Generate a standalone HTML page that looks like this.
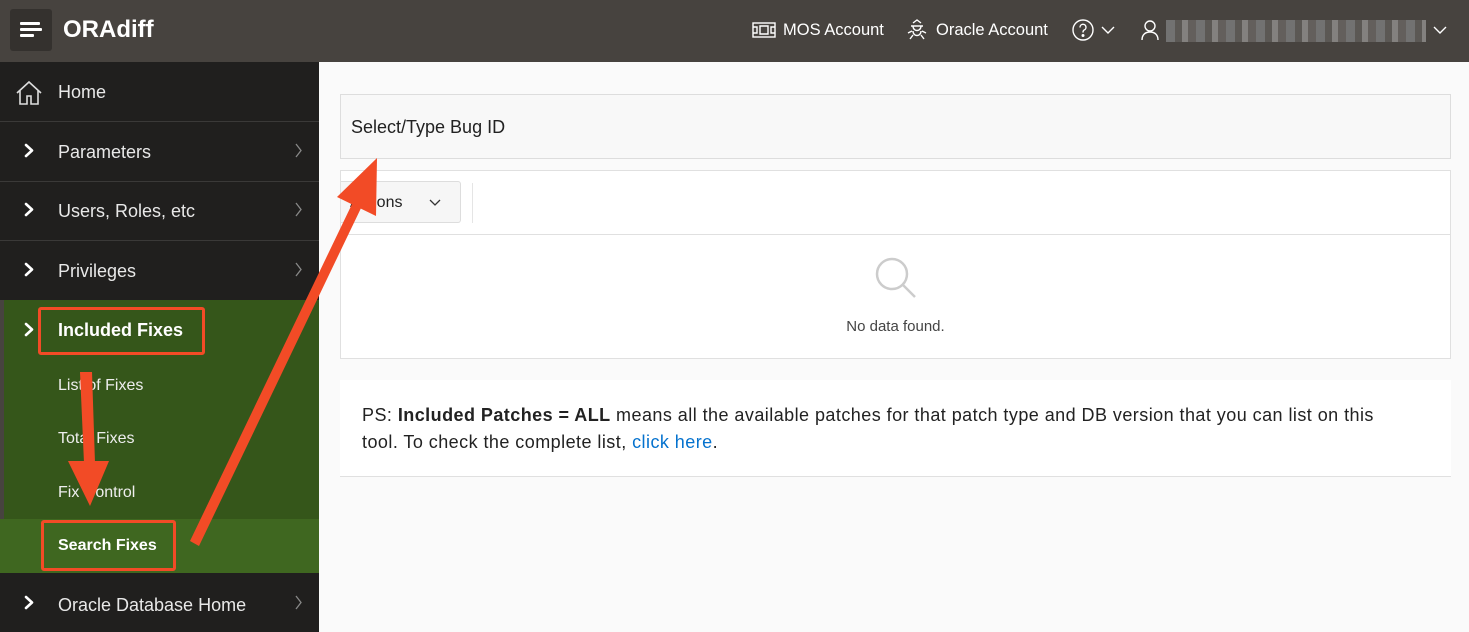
<!DOCTYPE html>
<html><head><meta charset="utf-8"><style>
*{box-sizing:border-box;margin:0;padding:0}
body{width:1469px;height:632px;overflow:hidden;font-family:"Liberation Sans",sans-serif;background:#fafafa;position:relative}
.top{position:absolute;left:0;top:0;width:1469px;height:62px;background:#47433f;color:#fff}
.burger{position:absolute;left:10px;top:9px;width:42px;height:42px;background:#34312e;border-radius:3px}
.burger i{position:absolute;left:10px;height:3px;background:#fff;border-radius:1px}
.logo{position:absolute;left:63px;top:16px;font-size:24px;font-weight:bold}
.nav{position:absolute;top:21px;font-size:16.5px;color:#fff}
.side{position:absolute;left:0;top:62px;width:319px;height:570px;background:#201f1e;color:#e8e8e8}
.item{position:absolute;left:0;width:319px;height:60px;border-bottom:1px solid #3a3938;font-size:18px}
.item span{position:absolute;left:58px;top:20px}
.green{position:absolute;left:0;top:300px;width:319px;height:219px;background:#35561a;border-left:4px solid #47433f}
.sel{position:absolute;left:0;top:519px;width:319px;height:54px;background:#3f6720}
.sub{position:absolute;left:58px;font-size:16px;color:#eee}
.box{position:absolute;border:1px solid #e0e0e0;background:#fff}
.red{position:absolute;border:3px solid #f24b26;border-radius:3px}
</style></head><body>
<div class="top">
<div class="burger"><i style="top:13px;width:20px"></i><i style="top:19px;width:22px"></i><i style="top:25px;width:14px"></i></div>
<div class="logo">ORAdiff</div>
<svg style="position:absolute;left:752px;top:22px" width="24" height="16" viewBox="0 0 24 16" fill="none" stroke="#fff" stroke-width="1.4"><rect x="1" y="1" width="22" height="14"/><path d="M1 5h4v6H1M23 5h-4v6h4M8 4h8v8H8z"/></svg>
<div class="nav" style="left:783px">MOS Account</div>
<svg style="position:absolute;left:906px;top:19px" width="22" height="22" viewBox="0 0 22 22" fill="none" stroke="#fff" stroke-width="1.4"><path d="M7 4l4-3 4 3M5 7h12M7 7c0 6 8 6 8 0M6 12l-4 2M16 12l4 2M7 16l-3 4M15 16l3 4M7 12c0 6 8 6 8 0"/></svg>
<div class="nav" style="left:936px">Oracle Account</div>
<svg style="position:absolute;left:1072px;top:19px" width="22" height="22" viewBox="0 0 22 22" fill="none" stroke="#fff" stroke-width="1.4"><circle cx="11" cy="11" r="10"/><path d="M8 8.5a3 3 0 1 1 4 2.6c-1 .5-1 1-1 2.4"/><circle cx="11" cy="16.5" r=".8" fill="#fff"/></svg>
<svg style="position:absolute;left:1101px;top:26px" width="14" height="9" viewBox="0 0 14 9" fill="none" stroke="#fff" stroke-width="1.4"><path d="M1 1l6 6 6-6"/></svg>
<svg style="position:absolute;left:1141px;top:19px" width="18" height="22" viewBox="0 0 18 22" fill="none" stroke="#fff" stroke-width="1.4"><circle cx="9" cy="7" r="5"/><path d="M1 21c0-5 3-8 8-8s8 3 8 8"/></svg>
<div style="position:absolute;left:1166px;top:20px;width:260px;height:22px;background:repeating-linear-gradient(90deg,#777 0 9px,#5d5a57 9px 16px,#8a8886 16px 22px,#66625f 22px 30px);opacity:.9"></div>
<svg style="position:absolute;left:1433px;top:26px" width="14" height="9" viewBox="0 0 14 9" fill="none" stroke="#fff" stroke-width="1.4"><path d="M1 1l6 6 6-6"/></svg>
</div>
<div class="side">
<div class="item" style="top:0"><svg style="position:absolute;left:15px;top:18px" width="28" height="26" viewBox="0 0 28 26" fill="none" stroke="#ddd" stroke-width="1.6"><path d="M2 13L14 2l12 11M5 10v14h7v-8h4v8h7V10"/></svg><span>Home</span></div>
<div class="item" style="top:60px"><span>Parameters</span></div>
<div class="item" style="top:119px"><span>Users, Roles, etc</span></div>
<div class="item" style="top:179px"><span>Privileges</span></div>
</div>
<div class="green"></div>
<div class="sel"></div>
<div style="position:absolute;left:58px;top:320px;color:#fff;font-weight:bold;font-size:18px">Included Fixes</div>
<div class="sub" style="top:377px">List of Fixes</div>
<div class="sub" style="top:430px">Total Fixes</div>
<div class="sub" style="top:484px">Fix Control</div>
<div class="sub" style="top:537px;font-weight:bold;color:#fff">Search Fixes</div>
<div style="position:absolute;left:0;top:573px;width:319px;height:59px;background:#201f1e;color:#e8e8e8;font-size:18px"><span style="position:absolute;left:58px;top:22px">Oracle Database Home</span></div>
<svg style="position:absolute;left:0;top:0" width="319" height="632" fill="none">
<g stroke="#fff" stroke-width="2.6" stroke-linecap="round" stroke-linejoin="round">
<path d="M26 145l6 5.5-6 5.5M26 204l6 5.5-6 5.5M26 264l6 5.5-6 5.5M26 324l6 5.5-6 5.5M26 597l6 5.5-6 5.5"/></g>
<g stroke="#888" stroke-width="1.3">
<path d="M296 144l5 6.5-5 6.5M296 203l5 6.5-5 6.5M296 263l5 6.5-5 6.5M296 596l5 6.5-5 6.5"/></g>
</svg>
<div class="red" style="left:38px;top:307px;width:167px;height:48px"></div>
<div class="red" style="left:41px;top:520px;width:135px;height:51px"></div>

<div class="box" style="left:340px;top:94px;width:1111px;height:65px;background:#f8f8f8;border-color:#ddd"><span style="position:absolute;left:10px;top:22px;font-size:18px;color:#222">Select/Type Bug ID</span></div>
<div class="box" style="left:340px;top:170px;width:1111px;height:189px">
<div style="position:absolute;left:0;top:10px;width:120px;height:42px;background:#f6f6f6;border:1px solid #ddd;border-left:0;border-radius:0 3px 3px 0;font-size:16px;color:#222"><span style="position:absolute;left:9px;top:12px">Actions</span><svg style="position:absolute;left:88px;top:17px" width="12" height="8" viewBox="0 0 12 8" fill="none" stroke="#333" stroke-width="1.3"><path d="M1 1l5 5 5-5"/></svg></div>
<div style="position:absolute;left:131px;top:12px;width:1px;height:40px;background:#e5e5e5"></div>
<div style="position:absolute;left:0;top:63px;width:1109px;height:1px;background:#e0e0e0"></div>
<svg style="position:absolute;left:533px;top:85px" width="44" height="44" viewBox="0 0 44 44" fill="none" stroke="#ccc" stroke-width="2.5"><circle cx="18" cy="18" r="15"/><path d="M29 29l12 12"/></svg>
<div style="position:absolute;left:0;width:1109px;top:147px;text-align:center;font-size:15px;color:#444">No data found.</div>
</div>
<div style="position:absolute;left:340px;top:380px;width:1111px;height:97px;background:#fff;border-bottom:1px solid #e0e0e0;font-size:18px;line-height:27px;color:#222;padding:22px 22px;letter-spacing:0.45px;white-space:nowrap">PS: <b>Included Patches = ALL</b> means all the available patches for that patch type and DB version that you can list on this<br>tool. To check the complete list, <span style="color:#0572ce">click here</span>.</div>

<svg style="position:absolute;left:0;top:0" width="1469" height="632">
<path d="M190 541L199 546L362 206L353 202Z" fill="#f24b26"/>
<path d="M377 158L337 197L376 216Z" fill="#f24b26"/>
<path d="M80 372L92 372L95 463L84 463Z" fill="#f24b26"/>
<path d="M68 461L109 461L90 506Z" fill="#f24b26"/>
</svg>
</body></html>
